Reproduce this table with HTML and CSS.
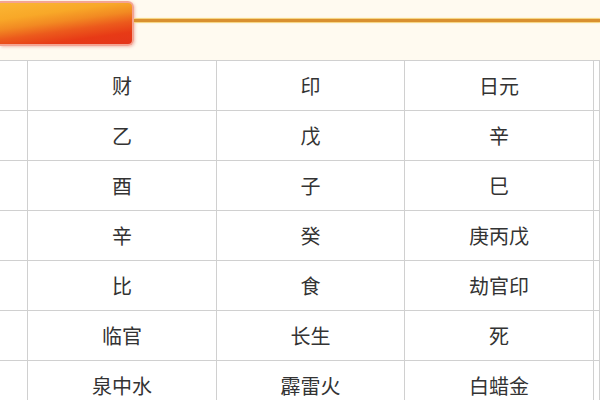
FILE: index.html
```html
<!DOCTYPE html>
<html lang="zh">
<head>
<meta charset="utf-8">
<link rel="stylesheet" href="styles.css">
</head>
<body>
<div class="page">
  <div class="header">
    <div class="tab"></div>
    <div class="rule"></div>
  </div>
  <div class="grid">
    <div class="cell"></div><div class="cell">财</div><div class="cell">印</div><div class="cell">日元</div><div class="cell"></div>
    <div class="cell"></div><div class="cell">乙</div><div class="cell">戊</div><div class="cell">辛</div><div class="cell"></div>
    <div class="cell"></div><div class="cell">酉</div><div class="cell">子</div><div class="cell">巳</div><div class="cell"></div>
    <div class="cell"></div><div class="cell">辛</div><div class="cell">癸</div><div class="cell">庚丙戊</div><div class="cell"></div>
    <div class="cell"></div><div class="cell">比</div><div class="cell">食</div><div class="cell">劫官印</div><div class="cell"></div>
    <div class="cell"></div><div class="cell">临官</div><div class="cell">长生</div><div class="cell">死</div><div class="cell"></div>
    <div class="cell"></div><div class="cell">泉中水</div><div class="cell">霹雷火</div><div class="cell">白蜡金</div><div class="cell"></div>
  </div>
</div>
</body>
</html>
```
FILE: styles.css
```css
html, body {
  margin: 0;
  padding: 0;
  background: #ffffff;
}
.page {
  width: 600px;
  height: 400px;
  overflow: hidden;
  font-family: "Noto Sans CJK SC", "Noto Sans", sans-serif;
}
.header {
  height: 60px;
  background: #fffaf0;
  display: flex;
  align-items: flex-start;
}
.tab {
  width: 134px;
  height: 45px;
  margin-top: 1px;
  box-sizing: border-box;
  border: 2px solid #f3a493;
  border-left: none;
  border-radius: 0 6px 6px 0;
  background: linear-gradient(172deg, #fbb634 0%, #f8a828 28%, #f28a22 45%, #ec5a1c 62%, #e73a16 80%, #e4351a 100%);
  box-shadow: 1px 1px 3px rgba(230, 130, 120, 0.5);
  flex: none;
}
.rule {
  flex: 1;
  height: 3px;
  margin-top: 19px;
  background: #d99030;
  box-shadow: 0 -1px 1px #f6d27a, 0 1px 1px #f6d27a;
}
.grid {
  display: grid;
  grid-template-columns: 28px 189px 188px 189px 1fr;
  grid-auto-rows: 50px;
  border-top: 1px solid #d0d0d0;
}
.cell {
  display: flex;
  align-items: center;
  justify-content: center;
  border-right: 1px solid #d0d0d0;
  border-bottom: 1px solid #d0d0d0;
  font-size: 20px;
  color: #333333;
  box-sizing: border-box;
}
```
